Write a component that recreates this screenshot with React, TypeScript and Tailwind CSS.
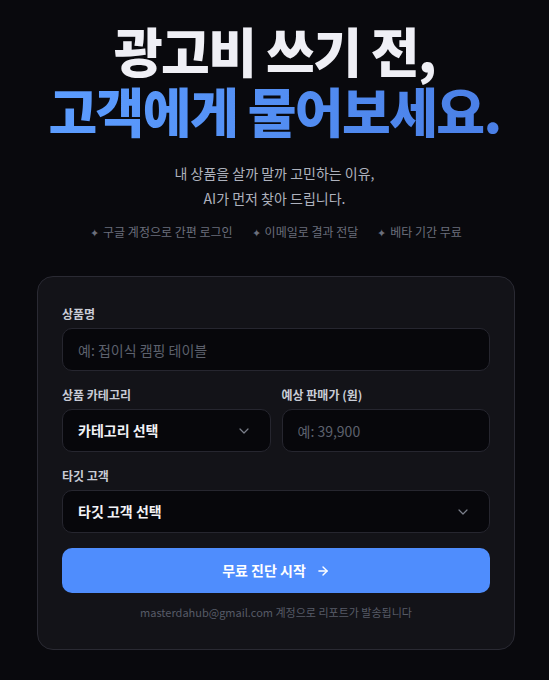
import { ChevronDown, ArrowRight } from "lucide-react";

const FONT = '"Noto Sans CJK KR", "Noto Sans", sans-serif';

function Label({ children }: { children: React.ReactNode }) {
  return <label className="mb-1.5 block text-[12px] leading-4 font-bold text-[#c9ccd6]">{children}</label>;
}

function TextField({ placeholder }: { placeholder: string }) {
  return (
    <input
      className="h-[43px] w-full rounded-[10px] border border-[#26262f] bg-[#07070b] px-[15px] text-[14px] text-[#e8e8ee] outline-none placeholder:text-[#5d616d]"
      placeholder={placeholder}
      type="text"
    />
  );
}

function SelectField({ value }: { value: string }) {
  return (
    <button
      className="flex h-[43px] w-full items-center justify-between rounded-[10px] border border-[#26262f] bg-[#07070b] pl-[15px] pr-[18px] text-left"
      type="button"
    >
      <span className="text-[14px] font-bold text-[#f2f2f6]">{value}</span>
      <ChevronDown className="h-4 w-4 text-[#7b7f8b]" strokeWidth={1.8} />
    </button>
  );
}

const perks = ["구글 계정으로 간편 로그인", "이메일로 결과 전달", "베타 기간 무료"];

export default function App() {
  return (
    <div className="min-h-[680px] w-full bg-[#09090d] pt-[20px] pb-8" style={{ fontFamily: FONT }}>
      <h1 className="text-center text-[53px] leading-[60px] font-black tracking-[-0.03em]">
        <span className="text-[#efeff5]">광고비 쓰기 전,</span>
        <br />
        <span className="bg-gradient-to-r from-[#5c9dff] to-[#4a7fe6] bg-clip-text text-transparent">
          고객에게 물어보세요.
        </span>
      </h1>

      <p className="mt-[21px] text-center text-[14px] leading-[25px] text-[#aeb2bd]">
        내 상품을 살까 말까 고민하는 이유,
        <br />
        AI가 먼저 찾아 드립니다.
      </p>

      <div className="mt-[12px] flex justify-center gap-[19px] pl-[3px] text-[12px] text-[#6b6f7c]">
        {perks.map((perk) => (
          <span key={perk}>
            <span className="mr-1 text-[11px]">✦</span>
            {perk}
          </span>
        ))}
      </div>

      <form className="mt-[35px] ml-[37px] w-[478px] rounded-[16px] border border-[#2a2a33] bg-[#131318] px-6 pt-[29px] pb-[28px]">
        <Label>상품명</Label>
        <TextField placeholder="예: 접이식 캠핑 테이블" />

        <div className="mt-4 grid grid-cols-2 gap-[11px]">
          <div>
            <Label>상품 카테고리</Label>
            <SelectField value="카테고리 선택" />
          </div>
          <div>
            <Label>예상 판매가 (원)</Label>
            <TextField placeholder="예: 39,900" />
          </div>
        </div>

        <div className="mt-4">
          <Label>타깃 고객</Label>
          <SelectField value="타깃 고객 선택" />
        </div>

        <button
          className="mt-[15px] flex h-[45px] w-full items-center justify-center gap-2.5 rounded-[10px] bg-[#4f8dfd] text-[14px] font-bold text-white"
          type="button"
        >
          무료 진단 시작
          <ArrowRight className="h-3.5 w-3.5" strokeWidth={2.4} />
        </button>

        <p className="mt-[11px] text-center text-[11px] text-[#575b67]">
          masterdahub@gmail.com 계정으로 리포트가 발송됩니다
        </p>
      </form>
    </div>
  );
}
